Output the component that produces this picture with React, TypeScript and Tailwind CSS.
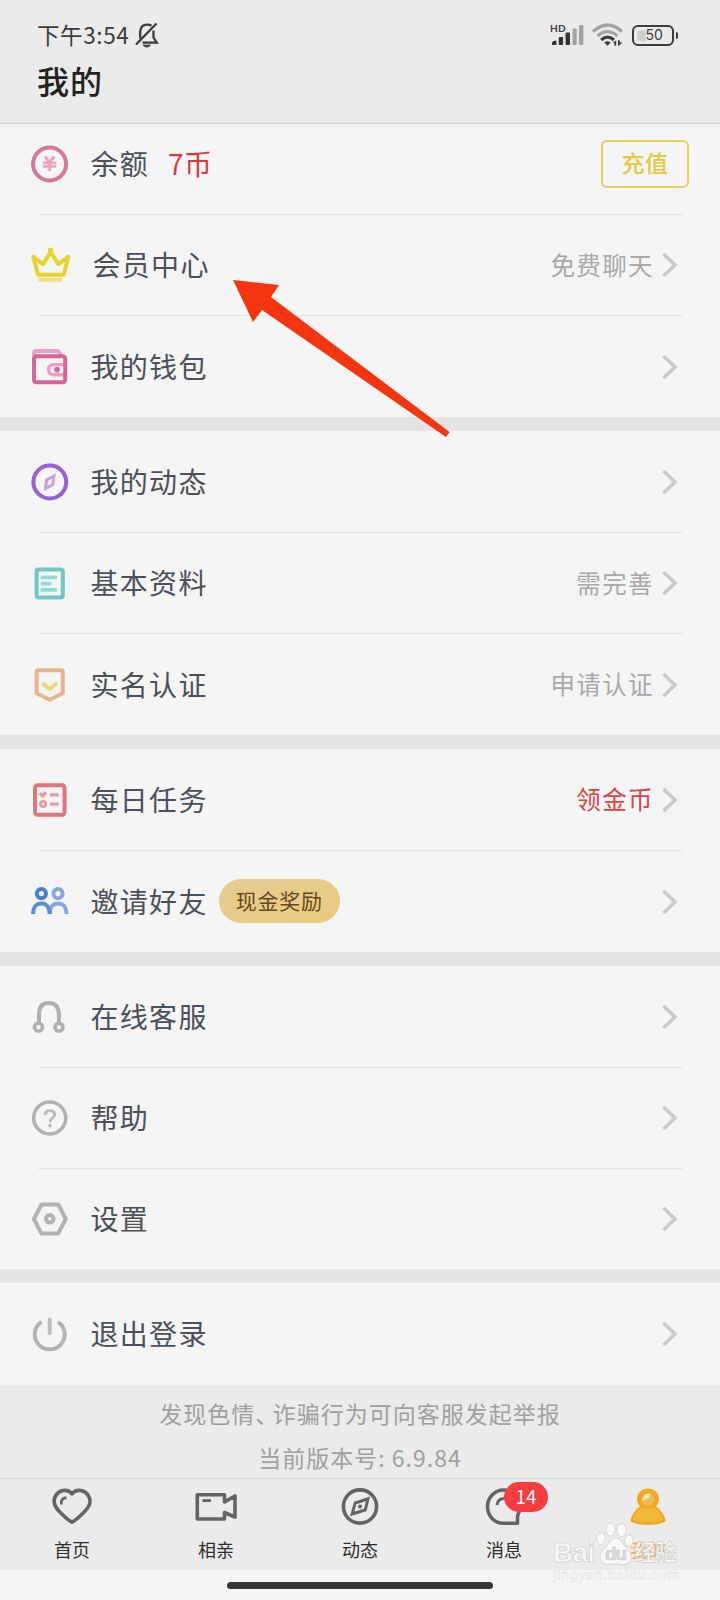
import React from "react";

interface MenuItem {
  label: string;
  icon: React.ReactNode;
  height: string;
  extra?: React.ReactNode;
  hint?: string;
  hintClass?: string;
  button?: string;
}

interface TabItem {
  label: string;
  icon: React.ReactNode;
  badge?: number;
  active?: boolean;
}

const Icon = ({ children }: { children: React.ReactNode }) => (
  <svg
    className="h-10 w-10 shrink-0 overflow-visible"
    viewBox="0 0 40 40"
    fill="none"
    strokeWidth="4"
    strokeLinejoin="round"
  >
    {children}
  </svg>
);

const TabIcon = ({ children }: { children: React.ReactNode }) => (
  <svg
    className="h-11 w-11"
    viewBox="0 0 44 44"
    fill="none"
    stroke="#646464"
    strokeWidth="3.6"
    strokeLinejoin="round"
  >
    {children}
  </svg>
);

const Chevron = () => (
  <svg
    className="h-[26px] w-4 shrink-0"
    viewBox="0 0 16 26"
    fill="none"
    stroke="#cbcbcb"
    strokeWidth="3.6"
  >
    <path d="M1.5 2L13 13L1.5 24" />
  </svg>
);

const sections: MenuItem[][] = [
  [
    {
      label: "余额",
      height: "h-[90px] pb-[11px]",
      extra: <span className="ml-[19px] tracking-[0.4px] text-[#d63c3c]">7币</span>,
      button: "充值",
      icon: (
        <Icon>
          <circle cx="19.6" cy="20" r="16.5" stroke="#d5789b" />
          <path
            d="M14.8 12.5L19.6 18.2L24.4 12.5M13 18.8H26.2M13 22.3H26.2M19.6 18V27"
            stroke="#eba3bf"
            strokeWidth="2.8"
          />
        </Icon>
      ),
    },
    {
      label: "会员中心",
      height: "h-[100px] [&_.label]:pl-[2px]",
      hint: "免费聊天",
      icon: (
        <Icon>
          <path d="M8.5 34.8H32" stroke="#f1de7c" strokeWidth="4" />
          <path d="M3.5 12.5L8 29.8H33.8L38 12.5L28.2 19L20.7 7L13.2 19Z" stroke="#e8d32c" />
          <circle cx="3.6" cy="12" r="2.3" fill="#e8d32c" />
          <circle cx="20.7" cy="5.2" r="2.6" fill="#e8d32c" />
          <circle cx="38" cy="12" r="2.3" fill="#e8d32c" />
        </Icon>
      ),
    },
    {
      label: "我的钱包",
      height: "h-[101px]",
      icon: (
        <Icon>
          <path d="M4 9V6.5Q4 4 6.5 4H26.5Q29.5 4 30.5 8" stroke="#ee9fc3" />
          <path d="M35 17.6H23.5Q18.5 17.6 18.5 22.6T23.5 27.8H35" stroke="#ee9fc3" strokeWidth="3.4" />
          <rect x="4" y="9.3" width="31.2" height="26" rx="2.5" stroke="#d8629a" />
          <circle cx="27" cy="22.6" r="2.8" fill="#d8629a" />
        </Icon>
      ),
    },
  ],
  [
    {
      label: "我的动态",
      height: "h-[101px]",
      icon: (
        <Icon>
          <circle cx="19.8" cy="20" r="16.4" stroke="#985fd6" />
          <path d="M24 14L22.8 22.5L15.6 26.5L16.6 18Z" stroke="#c5a3db" strokeWidth="3" strokeLinejoin="miter" />
        </Icon>
      ),
    },
    {
      label: "基本资料",
      height: "h-[100px]",
      hint: "需完善",
      icon: (
        <Icon>
          <rect x="6.6" y="6.5" width="26.2" height="28" rx="2" stroke="#6ec9c4" />
          <path
            d="M12.3 14.3H25.5M12.3 20.6H19.8M12.3 26.9H25.5"
            stroke="#92dad6"
            strokeWidth="3.8"
            strokeLinecap="round"
          />
        </Icon>
      ),
    },
    {
      label: "实名认证",
      height: "h-[101px]",
      hint: "申请认证",
      icon: (
        <Icon>
          <path d="M8 5.2H31.2Q32.8 5.2 32.8 7V28.3L19.7 34.8L6.6 28.3V7Q6.6 5.2 8 5.2Z" stroke="#e7b58d" />
          <path d="M12.3 18.2L19.7 23.8L27 18.2" stroke="#ecd775" />
        </Icon>
      ),
    },
  ],
  [
    {
      label: "每日任务",
      height: "h-[101px]",
      hint: "领金币",
      hintClass: "text-[#dc4444]",
      icon: (
        <Icon>
          <rect x="5" y="5.2" width="29.6" height="29.6" rx="2.5" stroke="#e1767a" />
          <path d="M9.8 13.2L12.6 16L16 12.2M20 14.8H28.6M20 24.2H28.6" stroke="#e99a9d" strokeWidth="3.3" />
          <circle cx="13.2" cy="24" r="2.8" stroke="#e99a9d" strokeWidth="2.6" />
        </Icon>
      ),
    },
    {
      label: "邀请好友",
      height: "h-[101px]",
      extra: (
        <span className="ml-[11px] flex h-11 w-[121px] items-center justify-center rounded-full bg-linear-to-br from-[#e4cc95] to-[#ebca7c] pb-px text-[21px] tracking-[0.7px] text-[#64491f]">
          现金奖励
        </span>
      ),
      icon: (
        <Icon>
          <circle cx="28" cy="11.6" r="4.6" stroke="#86a9e4" />
          <path d="M19.7 32C19.7 25.5 23 21.6 28.3 21.6S36.5 25.5 36.5 32" stroke="#86a9e4" />
          <circle cx="11.4" cy="11.6" r="4.6" stroke="#4a7fd3" />
          <path d="M3 32C3 25.5 6 21.6 11.2 21.6S19.7 25.5 19.7 32" stroke="#5a8cda" />
        </Icon>
      ),
    },
  ],
  [
    {
      label: "在线客服",
      height: "h-[101px]",
      icon: (
        <Icon>
          <g stroke="#b0b0b0">
            <path d="M9 26.5V16.5Q9.5 6 18.8 6T28.9 16.5V26.5" />
            <circle cx="8.5" cy="30.2" r="4" strokeWidth="3.6" />
            <circle cx="29" cy="30.2" r="4" strokeWidth="3.6" />
          </g>
        </Icon>
      ),
    },
    {
      label: "帮助",
      height: "h-[100px]",
      icon: (
        <Icon>
          <circle cx="19.7" cy="20" r="16" stroke="#b2b2b2" strokeWidth="3.5" />
          <path
            d="M15.2 17Q15.2 12.6 19.9 12.6T24.6 16.6Q24.6 18.8 22.3 20.2Q20 21.8 20 24.3"
            stroke="#bcbcbc"
            strokeWidth="2.9"
          />
          <circle cx="20" cy="27.6" r="1.9" fill="#bcbcbc" />
        </Icon>
      ),
    },
    {
      label: "设置",
      height: "h-[100px]",
      icon: (
        <Icon>
          <path d="M11.5 5.5H28.2L35.8 20L28.2 34.5H11.5L3.9 20Z" stroke="#b2b2b2" />
          <circle cx="19.8" cy="19.8" r="3.8" stroke="#b2b2b2" />
        </Icon>
      ),
    },
  ],
  [
    {
      label: "退出登录",
      height: "h-[102px]",
      icon: (
        <Icon>
          <path d="M11.5 7.8A15 15 0 1 0 27.9 7.8" stroke="#b4b4b4" />
          <path d="M19.7 5.5V19" stroke="#bdbdbd" strokeLinecap="round" />
        </Icon>
      ),
    },
  ],
];

const tabs: TabItem[] = [
  {
    label: "首页",
    icon: (
      <TabIcon>
        <path d="M22 9.8C19.5 6.8 16 6 13 6.6C7.5 7.6 3.8 12.5 4.2 18C4.5 22 6.8 25 10 28.2C13.8 32 18.5 36.2 22 38.2C25.5 36.2 30.2 32 34 28.2C37.2 25 39.8 22 40 18C40.3 12.5 36.5 7.6 31 6.6C28 6 24.5 6.8 22 9.8Z" />
        <path d="M11.3 20.5Q10.5 14.3 16.5 13.6" strokeWidth="2.8" />
      </TabIcon>
    ),
  },
  {
    label: "相亲",
    icon: (
      <TabIcon>
        <path d="M3.3 10.8H30.5V18L41 12V33.2L30.5 28.5V35H3.3Z" />
        <path d="M8.5 16.6H17" strokeWidth="2.8" />
      </TabIcon>
    ),
  },
  {
    label: "动态",
    icon: (
      <TabIcon>
        <circle cx="22" cy="22.5" r="16.6" />
        <path d="M30 14.8L27.2 26L14.1 30L17.2 19Z" strokeWidth="2.9" strokeLinejoin="miter" />
        <circle cx="22" cy="22.5" r="2" fill="#646464" stroke="none" />
      </TabIcon>
    ),
  },
  {
    label: "消息",
    badge: 14,
    icon: (
      <TabIcon>
        <path d="M35.5 39.3H21.5C12.5 39.3 5.5 31.8 5.5 22.8S12.5 6 21.5 6S38.5 14 38.5 22.8C38.5 27 35.5 29 35.5 33Z" />
        <path d="M15 21Q15.6 14.5 22.5 14.5" strokeWidth="2.8" />
      </TabIcon>
    ),
  },
  {
    label: "我的",
    active: true,
    icon: (
      <svg className="h-11 w-11" viewBox="0 0 44 44" fill="none">
        <path
          d="M22 4.5C15.8 4.5 11 9 11 14.8C11 18 12.3 20.6 14 22.4C9 25.5 5.5 31.3 4.2 37.5Q12 41 22 41T39.8 37.5C38.5 31.3 35 25.5 30 22.4C31.7 20.6 33 18 33 14.8C33 9 28.2 4.5 22 4.5Z"
          fill="#f0a91f"
        />
        <path d="M6.5 36Q10 25.5 16.5 24H27.5Q34 25.5 37.5 36Q22 40.5 6.5 36Z" fill="#f0b738" />
        <circle cx="22" cy="15.5" r="6.4" fill="#efb95b" />
        <path d="M16.2 16.5Q16.5 10 23 9.4Q26.5 14 16.2 16.5Z" fill="#f8e2b4" />
      </svg>
    ),
  },
];

const StatusBar = () => (
  <div className="flex h-[70px] items-center justify-between pl-[37px] pr-[42px]">
    <div className="flex items-center text-[#3c3c3c]">
      <span className="text-[22.5px] tracking-[0.6px]">下午3:54</span>
      <svg
        className="ml-[6px] h-[26px] w-6"
        viewBox="0 0 24 26"
        fill="none"
        stroke="#3c3c3c"
        strokeWidth="2.3"
      >
        <path d="M1 22.5L21.5 1.5" />
        <path d="M5.2 16.5V9.5Q5.8 2.8 12 2.6Q14.5 2.5 16.5 3.8M18.5 8.5V15.5L21.8 20.6H7.5" />
        <path d="M8 23.2H15.5Q12 26.8 8 23.2Z" fill="#3c3c3c" strokeWidth="1" />
      </svg>
    </div>
    <div className="flex items-center">
      <svg className="h-6 w-[34px]" viewBox="0 0 34 24">
        <text
          x="0"
          y="8.5"
          fontSize="10"
          fontWeight="700"
          fill="#3c3c3c"
          fontFamily="Lato, sans-serif"
          textLength="15.5"
        >
          HD
        </text>
        <path d="M2 22V20Q2 17.5 6.5 17.5V22Z" fill="#333" />
        <rect x="8.7" y="14" width="4.4" height="8" rx="1" fill="#333" />
        <rect x="15.6" y="9.5" width="4.4" height="12.5" rx="1" fill="#333" />
        <rect x="22.5" y="5.5" width="4.2" height="16.5" rx="1" fill="#a3a3a3" />
        <rect x="29" y="2" width="4.4" height="20" rx="1" fill="#a3a3a3" />
      </svg>
      <svg className="ml-2 h-6 w-8" viewBox="0 0 32 24" fill="none" strokeWidth="3.2">
        <path d="M1 8.5Q15.5 -4.5 30 8.5" stroke="#a3a3a3" />
        <path d="M5.5 13Q15.5 4.4 25.5 13" stroke="#a3a3a3" />
        <path d="M9.2 17Q15.5 11.2 22 17" stroke="#3c3c3c" />
        <path d="M12.3 19.5Q15.5 17 18.7 19.5L15.5 22.8Z" fill="#3c3c3c" />
        <path d="M20.5 20L24.2 17.3V22.8H22.4V20ZM26 17.3H27.8V19.6H30.5L26 23.2Z" fill="#3c3c3c" />
      </svg>
      <div className="ml-[8px] flex h-[21px] w-[42px] items-center rounded-[6px] border-[2.5px] border-[#3c3c3c] p-[3px]">
        <div className="h-full w-[9px] rounded-l-sm bg-[#cfcfcf]" />
        <span className="font-[Inter,sans-serif] text-[14px] leading-none text-[#3c3c3c]">50</span>
      </div>
      <div className="ml-[2px] h-[7px] w-[2.5px] rounded-r-sm bg-[#3c3c3c]" />
    </div>
  </div>
);

const MenuRow = ({ item }: { item: MenuItem }) => (
  <div className={`flex items-center pl-[30px] ${item.button ? "pr-[31px]" : "pr-[42px]"} ${item.height}`}>
    {item.icon}
    <div className="label ml-[20.5px] flex items-center pb-[2px] text-[28px] leading-none tracking-[1.3px] text-[#4b505a]">
      <span>{item.label}</span>
      {item.extra}
    </div>
    <div className="ml-auto flex items-center">
      {item.hint && (
        <span className={`mr-[8px] text-[24.5px] leading-none tracking-[1.4px] ${item.hintClass ?? "text-[#a9a9a9]"}`}>
          {item.hint}
        </span>
      )}
      {item.button ? (
        <button className="h-12 w-[88px] rounded-md border-2 border-[#e9cf5c] pb-[2px] text-[23px] font-medium leading-none tracking-[0.5px] text-[#e7c940]">
          {item.button}
        </button>
      ) : (
        <Chevron />
      )}
    </div>
  </div>
);

const Watermark = () => (
  <div className="absolute left-[552px] top-[1520px] h-[66px] w-[132px] opacity-90">
    <svg className="h-full w-full" viewBox="0 0 132 66">
      <g fill="#fbfbfb" stroke="#c9c9c9" strokeWidth="0.7" fontFamily="Liberation Sans, sans-serif">
        <text x="1" y="42" fontSize="28" fontWeight="700" textLength="42">
          Bai
        </text>
        <ellipse cx="49" cy="18.5" rx="4.2" ry="6" />
        <ellipse cx="58.5" cy="9.5" rx="4.6" ry="6.5" />
        <ellipse cx="69.7" cy="10" rx="4.6" ry="6.5" />
        <ellipse cx="77" cy="20.5" rx="4.2" ry="5.6" />
        <path d="M63.5 18C58 18 57 25 52 29C45 34 48 45 57 44.5Q63.5 43 70 44.5C80 45 82 35 75.5 29C70.5 25 69.5 18 63.5 18Z" />
        <text x="53" y="40" fontSize="19" fontWeight="700" fill="#dadada" textLength="22">
          du
        </text>
        <text x="82" y="40" fontSize="22" fontWeight="700" fontFamily="Noto Sans CJK SC, sans-serif" textLength="43">
          经验
        </text>
        <text x="1" y="59" fontSize="13.5" stroke="#dcdcdc" strokeWidth="0.4" textLength="126">
          jingyan.baidu.com
        </text>
      </g>
    </svg>
  </div>
);

export default function App() {
  return (
    <main className="relative flex h-[1600px] w-[720px] flex-col overflow-hidden bg-[#f5f5f5] font-['Noto_Sans_CJK_SC',sans-serif]">
      <header className="h-[124px] shrink-0 border-b border-[#d3d3d3] bg-[#ebebeb]">
        <StatusBar />
        <h1 className="-mt-[7px] pl-[37px] text-[32px] font-medium leading-[34px] tracking-[0.9px] text-[#222]">
          我的
        </h1>
      </header>

      <div className="flex shrink-0 flex-col gap-[14px] bg-[#e4e4e4]">
        {sections.map((items, i) => (
          <section key={i} className="bg-[#f5f5f5]">
            {items.map((item, j) => (
              <React.Fragment key={item.label}>
                {j > 0 && <div className="ml-[38px] mr-[37px] h-px bg-[#e4e4e4]" />}
                <MenuRow item={item} />
              </React.Fragment>
            ))}
          </section>
        ))}
      </div>

      <footer className="h-[93px] shrink-0 bg-[#ebebeb] pt-[6px] text-center text-[23px] leading-[44px] tracking-[1px] text-[#a0a0a0]">
        <p>
          发现色情<span className="mr-[5px] [font-feature-settings:'halt']">、</span>诈骗行为可向客服发起举报
        </p>
        <p>当前版本号: 6.9.84</p>
      </footer>

      <nav className="flex h-[92px] shrink-0 border-t border-[#d6d6d6] bg-[#ebebeb]">
        {tabs.map((tab) => (
          <div key={tab.label} className="flex flex-1 flex-col items-center pt-[5px]">
            <div className="relative">
              {tab.icon}
              {tab.badge && (
                <span className="absolute -top-[2px] left-[22px] flex h-[30px] w-11 items-center justify-center rounded-full bg-[#f73d40] pb-px text-[19px] text-white">
                  {tab.badge}
                </span>
              )}
            </div>
            <span className={`mt-3 text-[18px] leading-[18px] ${tab.active ? "text-[#eeb04a]" : "text-[#2e2e2e]"}`}>
              {tab.label}
            </span>
          </div>
        ))}
      </nav>
      <div className="flex flex-1 justify-center bg-[#f5f5f5] pt-[12px]">
        <div className="h-[7px] w-[266px] rounded-full bg-[#353535]" />
      </div>

      <svg className="absolute left-[230px] top-[276px] h-[165px] w-[225px]" viewBox="230 276 225 165">
        <path d="M233 280L279 285L271 297L449.5 432L446 437L262 310L253 322Z" fill="#f53510" />
      </svg>
      <Watermark />
    </main>
  );
}
